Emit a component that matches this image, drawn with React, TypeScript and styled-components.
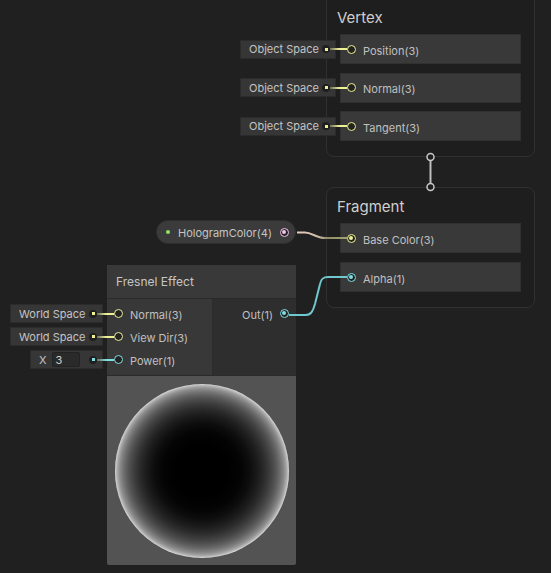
import React from "react";
import styled, { createGlobalStyle } from "styled-components";

const GlobalStyle = createGlobalStyle`
  html, body { margin: 0; padding: 0; background: #202020; }
  * { box-sizing: border-box; }
`;

const YELLOW = "#eef095";
const CYAN = "#7fdde2";
const PINK = "#f2c4ec";

const Canvas = styled.div`
  position: relative;
  width: 551px;
  height: 573px;
  overflow: hidden;
  background: #202020;
  font-family: Inter, "Noto Sans", sans-serif;
  font-size: 11px;
  color: #c0c0c0;
`;

/* ---------- master stack blocks ---------- */
const Block = styled.div<{ $top: number; $height: number }>`
  position: absolute;
  left: 326px;
  top: ${(p) => p.$top}px;
  width: 209px;
  height: ${(p) => p.$height}px;
  border: 1px solid #313131;
  border-radius: 8px;
  background: #1e1e1e;
  padding: 0 13px;
  display: flex;
  flex-direction: column;
`;

const BlockTitle = styled.div<{ $padTop: number }>`
  padding: ${(p) => p.$padTop}px 0 7px 0;
  margin-left: -3px;
  line-height: 18px;
  font-size: 15px;
  color: #cfcfcf;
`;

const RowList = styled.div<{ $gap: number }>`
  display: flex;
  flex-direction: column;
  gap: ${(p) => p.$gap}px;
`;

const BlockRow = styled.div`
  position: relative;
  height: 30px;
  background: #393939;
  border: 1px solid #303030;
  display: flex;
  align-items: center;
  padding-left: 6px;
  gap: 7px;
`;

const Label = styled.span`
  padding-top: 3px;
  white-space: nowrap;
`;

const Port = styled.span<{ $color: string; $filled?: boolean }>`
  position: relative;
  flex: none;
  width: 9px;
  height: 9px;
  border-radius: 50%;
  border: 1.5px solid ${(p) => p.$color};
  background: #232323;
  z-index: 2;
  &::after {
    content: "";
    display: ${(p) => (p.$filled ? "block" : "none")};
    position: absolute;
    left: 1px;
    top: 1px;
    width: 4px;
    height: 4px;
    border-radius: 50%;
    background: ${(p) => p.$color};
  }
`;

const Stub = styled.span<{ $color: string; $left: number }>`
  position: absolute;
  left: ${(p) => p.$left}px;
  top: calc(50% - 1px);
  width: 17px;
  height: 2px;
  background: linear-gradient(to right, #6d6d58, ${(p) => p.$color} 55%);
  z-index: 1;
`;

const Field = styled.div<{ $width: number; $gapRight: number }>`
  position: absolute;
  right: calc(100% + ${(p) => p.$gapRight}px);
  top: calc(50% - 9.5px);
  width: ${(p) => p.$width}px;
  height: 19px;
  background: #363636;
  border: 1px solid #2b2b2b;
  display: flex;
  align-items: center;
  justify-content: space-between;
  padding: 0 5px 0 8px;
  color: #c4c4c4;
  white-space: nowrap;
`;

const FieldDot = styled.span<{ $color: string }>`
  flex: none;
  width: 8px;
  height: 8px;
  border-radius: 50%;
  background: #1f1f1f;
  display: flex;
  align-items: center;
  justify-content: center;
  &::after {
    content: "";
    width: 3px;
    height: 3px;
    background: ${(p) => p.$color};
  }
`;

const FieldLabel = styled.span`
  display: flex;
  align-items: center;
  gap: 5px;
`;

const NumBox = styled.span`
  display: inline-flex;
  align-items: center;
  width: 28px;
  height: 15px;
  background: #2a2a2a;
  border: 1px solid #222;
  border-radius: 2px;
  padding-left: 3px;
  color: #d0d0d0;
`;

/* ---------- property pill ---------- */
const Pill = styled.div`
  position: absolute;
  left: 156px;
  top: 220px;
  width: 140px;
  height: 24px;
  border-radius: 12px;
  background: #3b3b3b;
  border: 1px solid #2d2d2d;
  display: flex;
  align-items: center;
  padding: 0 14px 0 9px;
  gap: 8px;
  color: #c4c4c4;
`;

const ExposedDot = styled.span`
  width: 4px;
  height: 4px;
  border-radius: 50%;
  background: #8ee45a;
  flex: none;
`;

const PillText = styled.span`
  flex: 1;
  padding-top: 1px;
`;

/* ---------- fresnel node ---------- */
const Node = styled.div`
  position: absolute;
  left: 107px;
  top: 265px;
  width: 189px;
  display: flex;
  flex-direction: column;
  background: #2e2e2e;
  border-radius: 2px;
`;

const NodeTitle = styled.div`
  height: 34px;
  background: #393939;
  border-bottom: 1px solid #2a2a2a;
  display: flex;
  align-items: center;
  padding-left: 9px;
  font-size: 12px;
  color: #c6c6c6;
`;

const NodeBody = styled.div`
  display: flex;
  height: 77px;
  border-bottom: 1px solid #2a2a2a;
`;

const Inputs = styled.div`
  width: 106px;
  background: #383838;
  border-right: 1px solid #2c2c2c;
  padding-top: 3px;
  display: flex;
  flex-direction: column;
`;

const Outputs = styled.div`
  flex: 1;
  background: #2e2e2e;
  padding-top: 3px;
  display: flex;
  flex-direction: column;
`;

const SlotRow = styled.div<{ $align: "start" | "end" }>`
  position: relative;
  height: 23px;
  display: flex;
  align-items: center;
  justify-content: ${(p) => (p.$align === "end" ? "flex-end" : "flex-start")};
  padding: 0 7px;
  gap: 7px;
  color: #c0c0c0;
`;

const Preview = styled.div`
  height: 189px;
  background: #535353;
  display: flex;
  align-items: center;
  justify-content: center;
  border-radius: 0 0 2px 2px;
`;

const Overlay = styled.svg`
  position: absolute;
  left: 0;
  top: 0;
  pointer-events: none;
  z-index: 5;
`;

/* fresnel falloff: (1 - N.V)^3 shown in sRGB */
const fresnelStops = [0, 0.3, 0.45, 0.55, 0.65, 0.72, 0.78, 0.83, 0.87, 0.9, 0.93, 0.95, 0.97, 0.985, 0.995, 1].map(
  (r) => {
    const v = Math.pow(1 - Math.sqrt(Math.max(0, 1 - r * r)), 3);
    const s = v <= 0.0031308 ? 12.92 * v : 1.055 * Math.pow(v, 1 / 2.4) - 0.055;
    const g = Math.round(Math.min(1, s) * 240);
    return { offset: r, color: `rgb(${g},${g},${g})` };
  }
);

const vertexRows = ["Position(3)", "Normal(3)", "Tangent(3)"];

export default function App() {
  return (
    <>
      <GlobalStyle />
      <Canvas>
        <Block $top={-12} $height={169}>
          <BlockTitle $padTop={20}>Vertex</BlockTitle>
          <RowList $gap={8.5}>
            {vertexRows.map((r) => (
              <BlockRow key={r}>
                <Field $width={96} $gapRight={5}>
                  Object Space
                  <FieldDot $color={YELLOW} />
                </Field>
                <Stub $color={YELLOW} $left={-11} />
                <Port $color={YELLOW} />
                <Label>{r}</Label>
              </BlockRow>
            ))}
          </RowList>
        </Block>

        <Block $top={187} $height={121}>
          <BlockTitle $padTop={10}>Fragment</BlockTitle>
          <RowList $gap={9}>
            <BlockRow>
              <Port $color={YELLOW} $filled />
              <Label>Base Color(3)</Label>
            </BlockRow>
            <BlockRow>
              <Port $color={CYAN} $filled />
              <Label>Alpha(1)</Label>
            </BlockRow>
          </RowList>
        </Block>

        <Pill>
          <ExposedDot />
          <PillText>HologramColor(4)</PillText>
          <Port $color={PINK} $filled />
        </Pill>

        <Node>
          <NodeTitle>Fresnel Effect</NodeTitle>
          <NodeBody>
            <Inputs>
              <SlotRow $align="start">
                <Field $width={93} $gapRight={4}>
                  World Space
                  <FieldDot $color={YELLOW} />
                </Field>
                <Stub $color={YELLOW} $left={-10} />
                <Port $color={YELLOW} />
                <Label>Normal(3)</Label>
              </SlotRow>
              <SlotRow $align="start">
                <Field $width={93} $gapRight={4}>
                  World Space
                  <FieldDot $color={YELLOW} />
                </Field>
                <Stub $color={YELLOW} $left={-10} />
                <Port $color={YELLOW} />
                <Label>View Dir(3)</Label>
              </SlotRow>
              <SlotRow $align="start">
                <Field $width={73} $gapRight={4}>
                  <FieldLabel>
                    X<NumBox>3</NumBox>
                  </FieldLabel>
                  <FieldDot $color={CYAN} />
                </Field>
                <Stub $color={CYAN} $left={-10} />
                <Port $color={CYAN} />
                <Label>Power(1)</Label>
              </SlotRow>
            </Inputs>
            <Outputs>
              <SlotRow $align="end">
                <Label>Out(1)</Label>
                <Port $color={CYAN} $filled />
              </SlotRow>
            </Outputs>
          </NodeBody>
          <Preview>
            <svg width="176" height="176" viewBox="0 0 176 176">
              <defs>
                <radialGradient id="fresnel" cx="88" cy="88" r="87" gradientUnits="userSpaceOnUse">
                  {fresnelStops.map((s) => (
                    <stop key={s.offset} offset={s.offset} stopColor={s.color} />
                  ))}
                </radialGradient>
              </defs>
              <circle cx="88" cy="88" r="87" fill="url(#fresnel)" />
            </svg>
          </Preview>
        </Node>

        <Overlay width="551" height="573" viewBox="0 0 551 573">
          <defs>
            <linearGradient id="colWire" x1="297" y1="0" x2="347" y2="0" gradientUnits="userSpaceOnUse">
              <stop offset="0" stopColor="#e6cdbd" />
              <stop offset="0.45" stopColor="#cbb8a3" />
              <stop offset="0.6" stopColor="#8e8c68" />
              <stop offset="1" stopColor="#a4a46c" />
            </linearGradient>
          </defs>
          <path
            d="M 297 232.5 L 305 232.5 C 312 232.5 316 238 325 238 L 347 238"
            fill="none"
            stroke="url(#colWire)"
            strokeWidth="2"
          />
          <path
            d="M 289 315 L 306 315 C 311 315 313 311 315 304 L 320 284 C 321 279 323 277 328 277 L 347 277"
            fill="none"
            stroke="#6ec8ce"
            strokeWidth="2"
          />
          <line x1="430.5" y1="161" x2="430.5" y2="183" stroke="#bdbdbd" strokeWidth="2" />
          <circle cx="430.5" cy="157" r="3.5" fill="#1e1e1e" stroke="#c8c8c8" strokeWidth="1.5" />
          <circle cx="430.5" cy="187" r="3.5" fill="#1e1e1e" stroke="#c8c8c8" strokeWidth="1.5" />
        </Overlay>
      </Canvas>
    </>
  );
}
